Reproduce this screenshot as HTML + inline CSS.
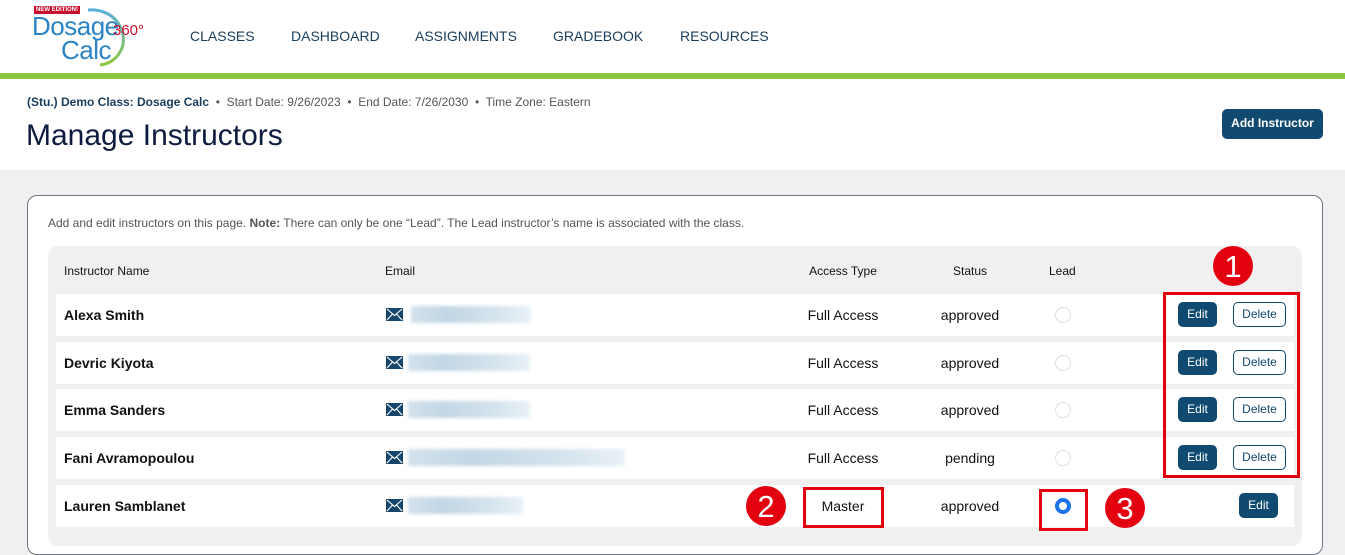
<!DOCTYPE html>
<html><head><meta charset="utf-8"><style>
*{margin:0;padding:0;box-sizing:border-box}
body{width:1345px;height:529px;overflow:hidden;background:#f0f0f0;font-family:"Liberation Sans",Arial,sans-serif;position:relative;color:#111}
.a{position:absolute}
.nav{font-size:14px;color:#1a3d5c;top:28px}
.row{position:absolute;left:56px;width:1238px;height:42px;background:#fff}
.row .n{position:absolute;left:8px;top:13px;font-weight:bold;font-size:14px}
.row .m{position:absolute;left:330px;top:14px;width:17px;height:13px}
.row .b{position:absolute;left:352px;top:12px;height:17px;background:linear-gradient(90deg,#d3e2ed,#c2d6e5 30%,#d5e3ed 70%,#e9f1f6);filter:blur(1.5px)}
.row .acc{position:absolute;left:720px;width:134px;text-align:center;top:13px;font-size:14px}
.row .st{position:absolute;left:854px;width:120px;text-align:center;top:13px;font-size:14px}
.row .r{position:absolute;left:999px;top:13px;width:16px;height:16px;border:1px solid #ddd;border-radius:50%}
.edit{position:absolute;top:8px;left:1122px;width:39px;height:25px;background:#104a71;color:#fff;border-radius:5px;font-size:12px;text-align:center;line-height:25px}
.del{position:absolute;top:8px;left:1177px;width:53px;height:25px;border:1px solid #104a71;color:#104a71;border-radius:5px;font-size:12px;text-align:center;line-height:23px;background:#fff}
.red{position:absolute;border:3px solid #e3000f}
.circ{position:absolute;width:40px;height:40px;border-radius:50%;background:#e3000f;color:#fff;font-size:31px;text-align:center;line-height:41px}
</style></head><body>
<div class="a" style="left:0;top:0;width:1345px;height:73px;background:#fff"></div>
<div class="a" style="left:0;top:73px;width:1345px;height:6px;background:#8dc63f"></div>
<div class="a" style="left:0;top:79px;width:1345px;height:91px;background:#fff"></div>
<!-- logo -->
<svg class="a" style="left:80px;top:6px" width="50" height="62"><defs><linearGradient id="g" x1="0" y1="0" x2="0" y2="1"><stop offset="0" stop-color="#5ab0d8"/><stop offset="1" stop-color="#8dc63f"/></linearGradient></defs><path d="M8 4 C34 2 48 24 42 42 C38 52 30 58 20 59" fill="none" stroke="url(#g)" stroke-width="3"/></svg>
<div class="a" style="left:34px;top:6px;background:#c8102e;color:#fff;font-size:6px;font-weight:bold;padding:0 2px;line-height:8px">NEW EDITION!</div>
<div class="a" style="left:32px;top:14px;color:#2a84c6;font-size:26px;line-height:24px;letter-spacing:-0.5px">Dosage<br><span style="margin-left:29px">Calc</span></div>
<div class="a" style="left:113px;top:22px;color:#c8102e;font-size:15px">360°</div>
<div class="a nav" style="left:190px">CLASSES</div>
<div class="a nav" style="left:291px">DASHBOARD</div>
<div class="a nav" style="left:415px">ASSIGNMENTS</div>
<div class="a nav" style="left:553px">GRADEBOOK</div>
<div class="a nav" style="left:680px">RESOURCES</div>
<div class="a" style="left:27px;top:95px;font-size:12px;color:#555"><b style="color:#1a3d5c">(Stu.) Demo Class: Dosage Calc</b> &nbsp;•&nbsp; Start Date: 9/26/2023 &nbsp;•&nbsp; End Date: 7/26/2030 &nbsp;•&nbsp; Time Zone: Eastern</div>
<div class="a" style="left:26px;top:119px;font-size:30px;color:#0d1b3e">Manage Instructors</div>
<div class="a" style="left:1222px;top:109px;width:101px;height:30px;background:#104a71;color:#fff;border-radius:5px;font-size:12px;font-weight:bold;text-align:center;line-height:28px">Add Instructor</div>
<div class="a" style="left:27px;top:195px;width:1296px;height:360px;background:#fff;border:1px solid #6b7785;border-radius:10px"></div>
<div class="a" style="left:48px;top:216px;font-size:12px;color:#555">Add and edit instructors on this page. <b>Note:</b> There can only be one “Lead”. The Lead instructor’s name is associated with the class.</div>
<div class="a" style="left:48px;top:246px;width:1254px;height:300px;background:#f0f0f0;border-radius:10px"></div>
<div class="a" style="left:64px;top:264px;font-size:12px">Instructor Name</div>
<div class="a" style="left:385px;top:264px;font-size:12px">Email</div>
<div class="a" style="left:776px;top:264px;width:134px;text-align:center;font-size:12px">Access Type</div>
<div class="a" style="left:910px;top:264px;width:120px;text-align:center;font-size:12px">Status</div>
<div class="a" style="left:1049px;top:264px;font-size:12px">Lead</div>

<svg width="0" height="0" style="position:absolute"><symbol id="mail" viewBox="0 0 17 13"><rect width="17" height="13" fill="#16466b"/><path d="M1 1 L8.5 7.5 L16 1 M1 12 L6.5 6 M16 12 L10.5 6" stroke="#fff" stroke-width="1.1" fill="none"/></symbol></svg>

<div class="row" style="top:294px"><div class="n">Alexa Smith</div><svg class="m"><use href="#mail"/></svg><div class="b" style="width:120px;left:355px"></div><div class="acc">Full Access</div><div class="st">approved</div><div class="r"></div><div class="edit">Edit</div><div class="del">Delete</div></div>
<div class="row" style="top:342px"><div class="n">Devric Kiyota</div><svg class="m"><use href="#mail"/></svg><div class="b" style="width:122px"></div><div class="acc">Full Access</div><div class="st">approved</div><div class="r"></div><div class="edit">Edit</div><div class="del">Delete</div></div>
<div class="row" style="top:389px"><div class="n">Emma Sanders</div><svg class="m"><use href="#mail"/></svg><div class="b" style="width:122px"></div><div class="acc">Full Access</div><div class="st">approved</div><div class="r"></div><div class="edit">Edit</div><div class="del">Delete</div></div>
<div class="row" style="top:437px"><div class="n">Fani Avramopoulou</div><svg class="m"><use href="#mail"/></svg><div class="b" style="width:217px"></div><div class="acc">Full Access</div><div class="st">pending</div><div class="r"></div><div class="edit">Edit</div><div class="del">Delete</div></div>
<div class="row" style="top:485px"><div class="n">Lauren Samblanet</div><svg class="m"><use href="#mail"/></svg><div class="b" style="width:115px"></div><div class="acc">Master</div><div class="st">approved</div><div class="r" style="border:4px solid #1a73e8"></div><div class="edit" style="left:1183px">Edit</div></div>

<div class="red" style="left:1163px;top:292px;width:137px;height:186px"></div>
<div class="red" style="left:803px;top:487px;width:81px;height:41px"></div>
<div class="red" style="left:1039px;top:489px;width:49px;height:42px"></div>
<div class="circ" style="left:1213px;top:246px">1</div>
<div class="circ" style="left:746px;top:486px">2</div>
<div class="circ" style="left:1105px;top:488px">3</div>
</body></html>
